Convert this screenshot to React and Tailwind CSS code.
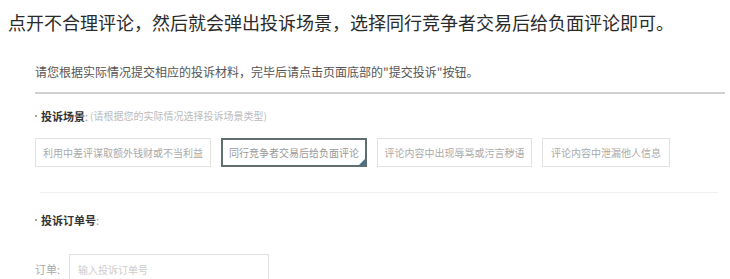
import React from 'react';

const scenes = [
  { text: '利用中差评谋取额外钱财或不当利益', w: 'w-[176px]' },
  { text: '同行竞争者交易后给负面评论', w: 'w-[146px]', active: true },
  { text: '评论内容中出现辱骂或污言秽语', w: 'w-[155px]' },
  { text: '评论内容中泄漏他人信息', w: 'w-[128px]' },
];

const font = { fontFamily: '"Noto Sans CJK SC", "Noto Sans", sans-serif' };

const Label = ({ children }) => (
  <span className="inline-flex items-center">
    <span className="w-[2px] h-[2px] rounded-full bg-[#888] mr-[4px]" />
    <span className="font-bold text-[#333]">{children}</span>
    <span className="text-[#999]">:</span>
  </span>
);

const App = () => {
  return (
    <div className="w-[730px] h-[279px] bg-white overflow-hidden" style={font}>
      {/* Caption above the screenshot */}
      <p className="pl-[8px] pt-[9px] text-[18px] leading-[26px] text-[#2a2a2a] whitespace-nowrap">
        点开不合理评论，然后就会弹出投诉场景，选择同行竞争者交易后给负面评论即可。
      </p>

      <div className="pl-[35px] pr-[5px]">
        <p className="mt-[30px] text-[12px] leading-[14px] text-[#555] whitespace-nowrap">
          请您根据实际情况提交相应的投诉材料，完毕后请点击页面底部的"提交投诉"按钮。
        </p>
        <div className="mt-[13px] h-[2px] bg-[#d0d0d0]" />

        {/* Scene */}
        <div className="mt-[15px] flex items-center text-[11px] leading-[14px] whitespace-nowrap">
          <Label>投诉场景</Label>
          <span className="ml-[2px] text-[10px] text-[#bbb]">(请根据您的实际情况选择投诉场景类型)</span>
        </div>
        <div className="mt-[15px] flex gap-[10px]">
          {scenes.map((s) => (
            <div
              key={s.text}
              className={`relative h-[29px] ${s.w} flex items-center justify-center text-[10px] whitespace-nowrap ${
                s.active ? 'border-2 border-[#5f6e6e] text-[#999]' : 'border border-[#e2e2e2] text-[#aaa]'
              }`}
            >
              {s.text}
              {s.active && (
                <span className="absolute right-0 bottom-0 w-0 h-0 border-l-[6px] border-l-transparent border-b-[6px] border-b-[#4d6f8f]" />
              )}
            </div>
          ))}
        </div>
        <div className="mt-[25px] ml-[5px] mr-[7px] h-[1px] bg-[#efefef]" />

        {/* Order number */}
        <div className="mt-[20px] flex items-center text-[11px] leading-[14px] whitespace-nowrap">
          <Label>投诉订单号</Label>
        </div>
        <div className="mt-[27px] flex items-center gap-[9px]">
          <span className="text-[11px] text-[#aaa] whitespace-nowrap">订单:</span>
          <div className="w-[200px] h-[30px] border border-[#e0e0e0] flex items-center pl-[8px] text-[10px] text-[#ccc] whitespace-nowrap">
            输入投诉订单号
          </div>
        </div>
      </div>
    </div>
  );
};

export default App;
